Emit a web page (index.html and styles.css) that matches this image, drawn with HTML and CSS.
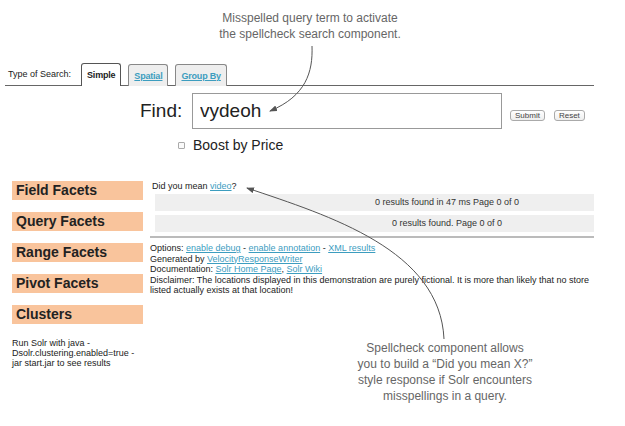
FILE: index.html
```html
<!DOCTYPE html>
<html lang="en">
<head>
    <meta charset="UTF-8">
    <title>Solr Spellcheck</title>
    <link rel="stylesheet" href="styles.css">
</head>
<body>
    <div class="page">
        <p class="note note-top">Misspelled query term to activate<br>the spellcheck search component.</p>

        <div class="shot">
            <div class="tabs">
                <span class="tabs-label">Type of Search:</span>
                <span class="tab active">Simple</span>
                <span class="tab"><a href="#">Spatial</a></span>
                <span class="tab"><a href="#">Group By</a></span>
            </div>

            <form class="query">
                <label class="find-label" for="q">Find:</label>
                <input class="find-box" type="text" id="q" value="vydeoh">
                <button class="btn" type="button">Submit</button>
                <button class="btn" type="button">Reset</button>
            </form>

            <div class="boost"><span class="check"></span>Boost by Price</div>

            <div class="main">
                <aside class="facets">
                    <div class="facet">Field Facets</div>
                    <div class="facet">Query Facets</div>
                    <div class="facet">Range Facets</div>
                    <div class="facet">Pivot Facets</div>
                    <div class="facet">Clusters</div>
                    <p class="facet-note">Run Solr with java -<br>Dsolr.clustering.enabled=true -<br>jar start.jar to see results</p>
                </aside>

                <section class="results">
                    <div class="did-you-mean">Did you mean <a href="#">video</a>?</div>
                    <div class="bar">0 results found in 47 ms Page 0 of 0</div>
                    <div class="bar">0 results found. Page 0 of 0</div>
                    <div class="footer">
                        Options: <a href="#">enable debug</a> - <a href="#">enable annotation</a> - <a href="#">XML results</a><br>
                        Generated by <a href="#">VelocityResponseWriter</a><br>
                        Documentation: <a href="#">Solr Home Page</a>, <a href="#">Solr Wiki</a><br>
                        Disclaimer: The locations displayed in this demonstration are purely fictional. It is more than likely that no store<br>
                        listed actually exists at that location!
                    </div>
                </section>
            </div>
        </div>

        <p class="note note-bottom">Spellcheck component allows<br>you to build a “Did you mean X?”<br>style response if Solr encounters<br>misspellings in a query.</p>

        <svg class="arrows" width="625" height="426" viewBox="0 0 625 426">
            <defs>
                <marker id="head" markerWidth="8" markerHeight="6" refX="7" refY="3" orient="auto-start-reverse" markerUnits="userSpaceOnUse">
                    <path d="M0,0 L8,3 L0,6 Z" fill="#555"/>
                </marker>
            </defs>
            <path d="M312,46 C313,72 306,96 270,111" fill="none" stroke="#555" stroke-width="1" marker-end="url(#head)"/>
            <path d="M247,188 C330,216 440,250 444,339" fill="none" stroke="#555" stroke-width="1" marker-start="url(#head)"/>
        </svg>
    </div>
</body>
</html>
```

FILE: styles.css
```css
body {
    margin: 0;
    background: #fff;
    font-family: "Liberation Sans", Arial, sans-serif;
    color: #222;
}
a {
    color: #3c9dbf;
}
.page {
    position: relative;
    width: 625px;
    height: 426px;
    overflow: hidden;
}
.note {
    margin: 0;
    font-size: 12px;
    line-height: 16px;
    color: #666;
    text-align: center;
}
.note-top {
    width: 220px;
    margin-left: 200px;
    padding-top: 10px;
    height: 53px;
}
.note-bottom {
    position: absolute;
    left: 335px;
    top: 340px;
    width: 220px;
}
.arrows {
    position: absolute;
    left: 0;
    top: 0;
    pointer-events: none;
}
.shot {
    width: 594px;
    overflow: hidden;
}
.tabs {
    display: flex;
    align-items: flex-end;
    height: 22px;
    margin-left: 5px;
    border-bottom: 1px solid #666;
    font-size: 9px;
}
.tabs-label {
    padding: 0 10px 6px 3px;
}
.tab {
    box-sizing: border-box;
    height: 22px;
    margin-right: 7px;
    margin-bottom: -1px;
    padding: 6px 5px 0;
    border: 1px solid #888;
    border-bottom: none;
    border-radius: 3px 3px 0 0;
    background: #eee;
    font-weight: bold;
    letter-spacing: -0.2px;
}
.tab a {
    color: #3c9dbf;
}
.tab.active {
    background: #fff;
    border-color: #555;
    height: 23px;
    padding-left: 5px;
    padding-right: 5px;
}
.query {
    display: flex;
    align-items: center;
    margin: 7px 0 0;
    padding-left: 140px;
}
.find-label {
    font-size: 19px;
    width: 52px;
}
.find-box {
    box-sizing: border-box;
    width: 310px;
    height: 36px;
    padding: 0 7px;
    border: 1px solid #999;
    font-family: "Liberation Sans", Arial, sans-serif;
    font-size: 19px;
    color: #222;
}
.btn {
    align-self: flex-end;
    margin: 0 0 8px 8px;
    height: 11px;
    padding: 0 4px;
    border: 1px solid #aaa;
    border-radius: 3px;
    background: linear-gradient(#fff, #eee);
    font-family: "Liberation Sans", Arial, sans-serif;
    font-size: 8px;
    line-height: 9px;
    color: #444;
}
.btn + .btn {
    margin-left: 9px;
}
.boost {
    display: flex;
    align-items: center;
    gap: 8px;
    margin-top: 8px;
    padding-left: 178px;
    font-size: 14px;
    line-height: 16px;
}
.check {
    width: 5px;
    height: 5px;
    border: 1px solid #aaa;
    border-radius: 1px;
    background: #fafafa;
}
.main {
    display: flex;
    gap: 7px;
    margin-top: 28px;
}
.facets {
    flex: none;
    width: 131px;
    margin-left: 12px;
    display: flex;
    flex-direction: column;
    gap: 12px;
}
.facet {
    height: 19px;
    padding-left: 4px;
    background: #f9c49c;
    font-size: 14px;
    font-weight: bold;
    line-height: 19px;
}
.facet-note {
    margin: 2px 0 0;
    font-size: 9px;
    line-height: 10px;
}
.results {
    flex: none;
    width: 600px;
    font-size: 9px;
}
.did-you-mean {
    height: 13px;
    padding-left: 2px;
    line-height: 11px;
}
.bar {
    height: 17px;
    margin: 0 0 4px 5px;
    width: 584px;
    background: #efefef;
    text-align: center;
    line-height: 16px;
    color: #333;
}
.footer {
    margin-top: 4px;
    padding-top: 5px;
    border-top: 2px solid #bbb;
    line-height: 10.6px;
    white-space: nowrap;
}
```
